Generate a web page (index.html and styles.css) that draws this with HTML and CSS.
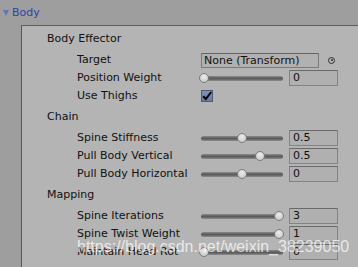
FILE: index.html
```html
<!DOCTYPE html>
<html>
<head>
<meta charset="utf-8">
<link rel="stylesheet" href="styles.css">
</head>
<body>
<div class="inspector">
  <div class="foldout"><span class="tri"></span><span class="title">Body</span></div>
  <div class="panel">
    <section class="group">
      <div class="group-title">Body Effector</div>
      <div class="row"><span class="label">Target</span>
        <div class="control"><div class="objfield">None (Transform)</div><span class="picker"><span class="dot"></span></span></div></div>
      <div class="row"><span class="label">Position Weight</span>
        <div class="control"><div class="slider"><div class="track"></div><div class="thumb" style="--v:0"></div></div><div class="num">0</div></div></div>
      <div class="row"><span class="label">Use Thighs</span>
        <div class="control"><span class="check"><svg width="12" height="12" viewBox="0 0 12 12"><path d="M2.2 6.2 L4.8 9 L10.2 2" fill="none" stroke="#000" stroke-width="2"/></svg></span></div></div>
    </section>
    <section class="group">
      <div class="group-title">Chain</div>
      <div class="row"><span class="label">Spine Stiffness</span>
        <div class="control"><div class="slider"><div class="track"></div><div class="thumb" style="--v:0.5"></div></div><div class="num">0.5</div></div></div>
      <div class="row"><span class="label">Pull Body Vertical</span>
        <div class="control"><div class="slider"><div class="track"></div><div class="thumb" style="--v:0.75"></div></div><div class="num">0.5</div></div></div>
      <div class="row"><span class="label">Pull Body Horizontal</span>
        <div class="control"><div class="slider"><div class="track"></div><div class="thumb" style="--v:0.5"></div></div><div class="num">0</div></div></div>
    </section>
    <section class="group">
      <div class="group-title">Mapping</div>
      <div class="row"><span class="label">Spine Iterations</span>
        <div class="control"><div class="slider"><div class="track"></div><div class="thumb" style="--v:1"></div></div><div class="num">3</div></div></div>
      <div class="row"><span class="label">Spine Twist Weight</span>
        <div class="control"><div class="slider"><div class="track"></div><div class="thumb" style="--v:1"></div></div><div class="num">1</div></div></div>
      <div class="row"><span class="label">Maintain Head Rot</span>
        <div class="control"><div class="slider"><div class="track"></div><div class="thumb" style="--v:0"></div></div><div class="num">0</div></div></div>
    </section>
  </div>
  <div class="watermark">https://blog.csdn.net/weixin_38239050</div>
</div>
</body>
</html>
```

FILE: styles.css
```css
html, body {
  margin: 0;
  padding: 0;
}
body {
  width: 358px;
  height: 267px;
  overflow: hidden;
  background: #9e9e9e;
  font-family: "DejaVu Sans", Verdana, sans-serif;
  font-size: 11px;
  color: #111;
}
.inspector {
  position: relative;
  height: 267px;
  display: flex;
  flex-direction: column;
}
.foldout {
  height: 25px;
  display: flex;
  align-items: center;
  padding-left: 3px;
  box-sizing: border-box;
}
.tri {
  width: 0;
  height: 0;
  border-left: 3.5px solid transparent;
  border-right: 3.5px solid transparent;
  border-top: 6px solid #6673b5;
  margin-top: 1px;
}
.title {
  margin-left: 3px;
  color: #2f43a6;
  line-height: 18px;
}
.panel {
  flex: 1;
  margin-left: 21px;
  border-left: 1px solid #575757;
  border-top: 1px solid #5e5e5e;
  background: #b4b4b4;
  padding-top: 4px;
}
.group {
  display: flex;
  flex-direction: column;
  margin-bottom: 3px;
}
.group-title {
  height: 18px;
  line-height: 18px;
  padding-left: 25px;
  margin-bottom: 3px;
}
.row {
  height: 18px;
  display: flex;
  align-items: center;
  padding-left: 55px;
}
.label {
  width: 124px;
  line-height: 18px;
  white-space: nowrap;
  overflow: hidden;
  flex: none;
}
.control {
  display: flex;
  align-items: center;
}
.objfield {
  width: 118px;
  height: 15px;
  box-sizing: border-box;
  border: 1px solid #7a7a7a;
  border-top-color: #646464;
  background: #b1b1b1;
  line-height: 13px;
  padding-left: 2px;
  white-space: nowrap;
}
.picker {
  margin-left: 9px;
  width: 7px;
  height: 7px;
  box-sizing: border-box;
  border: 1px solid #2e2e2e;
  border-radius: 50%;
  display: flex;
  align-items: center;
  justify-content: center;
}
.dot {
  width: 2px;
  height: 2px;
  background: #2e2e2e;
  border-radius: 50%;
}
.slider {
  position: relative;
  width: 82px;
  height: 12px;
  display: flex;
  align-items: center;
}
.track {
  width: 100%;
  height: 5px;
  border-radius: 3px;
  background: linear-gradient(#8c8c8c, #5a5a5a 45%, #5f5f5f 60%, #8e8e8e);
}
.thumb {
  position: absolute;
  top: 1px;
  left: calc(var(--v) * 75px - 2px);
  width: 10px;
  height: 10px;
  box-sizing: border-box;
  border-radius: 50%;
  border: 1px solid #7c7c7c;
  background: radial-gradient(circle at 50% 35%, #ececec, #d2d2d2 60%, #bdbdbd);
}
.num {
  margin-left: 6px;
  width: 49px;
  height: 16px;
  box-sizing: border-box;
  border: 1px solid #838383;
  border-top-color: #6a6a6a;
  background: #b0b0b0;
  line-height: 14px;
  padding-left: 3px;
}
.check {
  width: 12px;
  height: 12px;
  box-sizing: border-box;
  border: 1px solid #4e5a78;
  background: linear-gradient(#8291b3, #6a7ba0);
  display: flex;
  align-items: center;
  justify-content: center;
  margin-top: -1px;
}
.check svg {
  display: block;
  margin: -1px;
}
.watermark {
  position: absolute;
  left: 77px;
  top: 239px;
  font-family: "Liberation Sans", Arial, sans-serif;
  font-size: 16px;
  line-height: 16px;
  color: rgba(255, 255, 255, 0.72);
  white-space: nowrap;
}
```
